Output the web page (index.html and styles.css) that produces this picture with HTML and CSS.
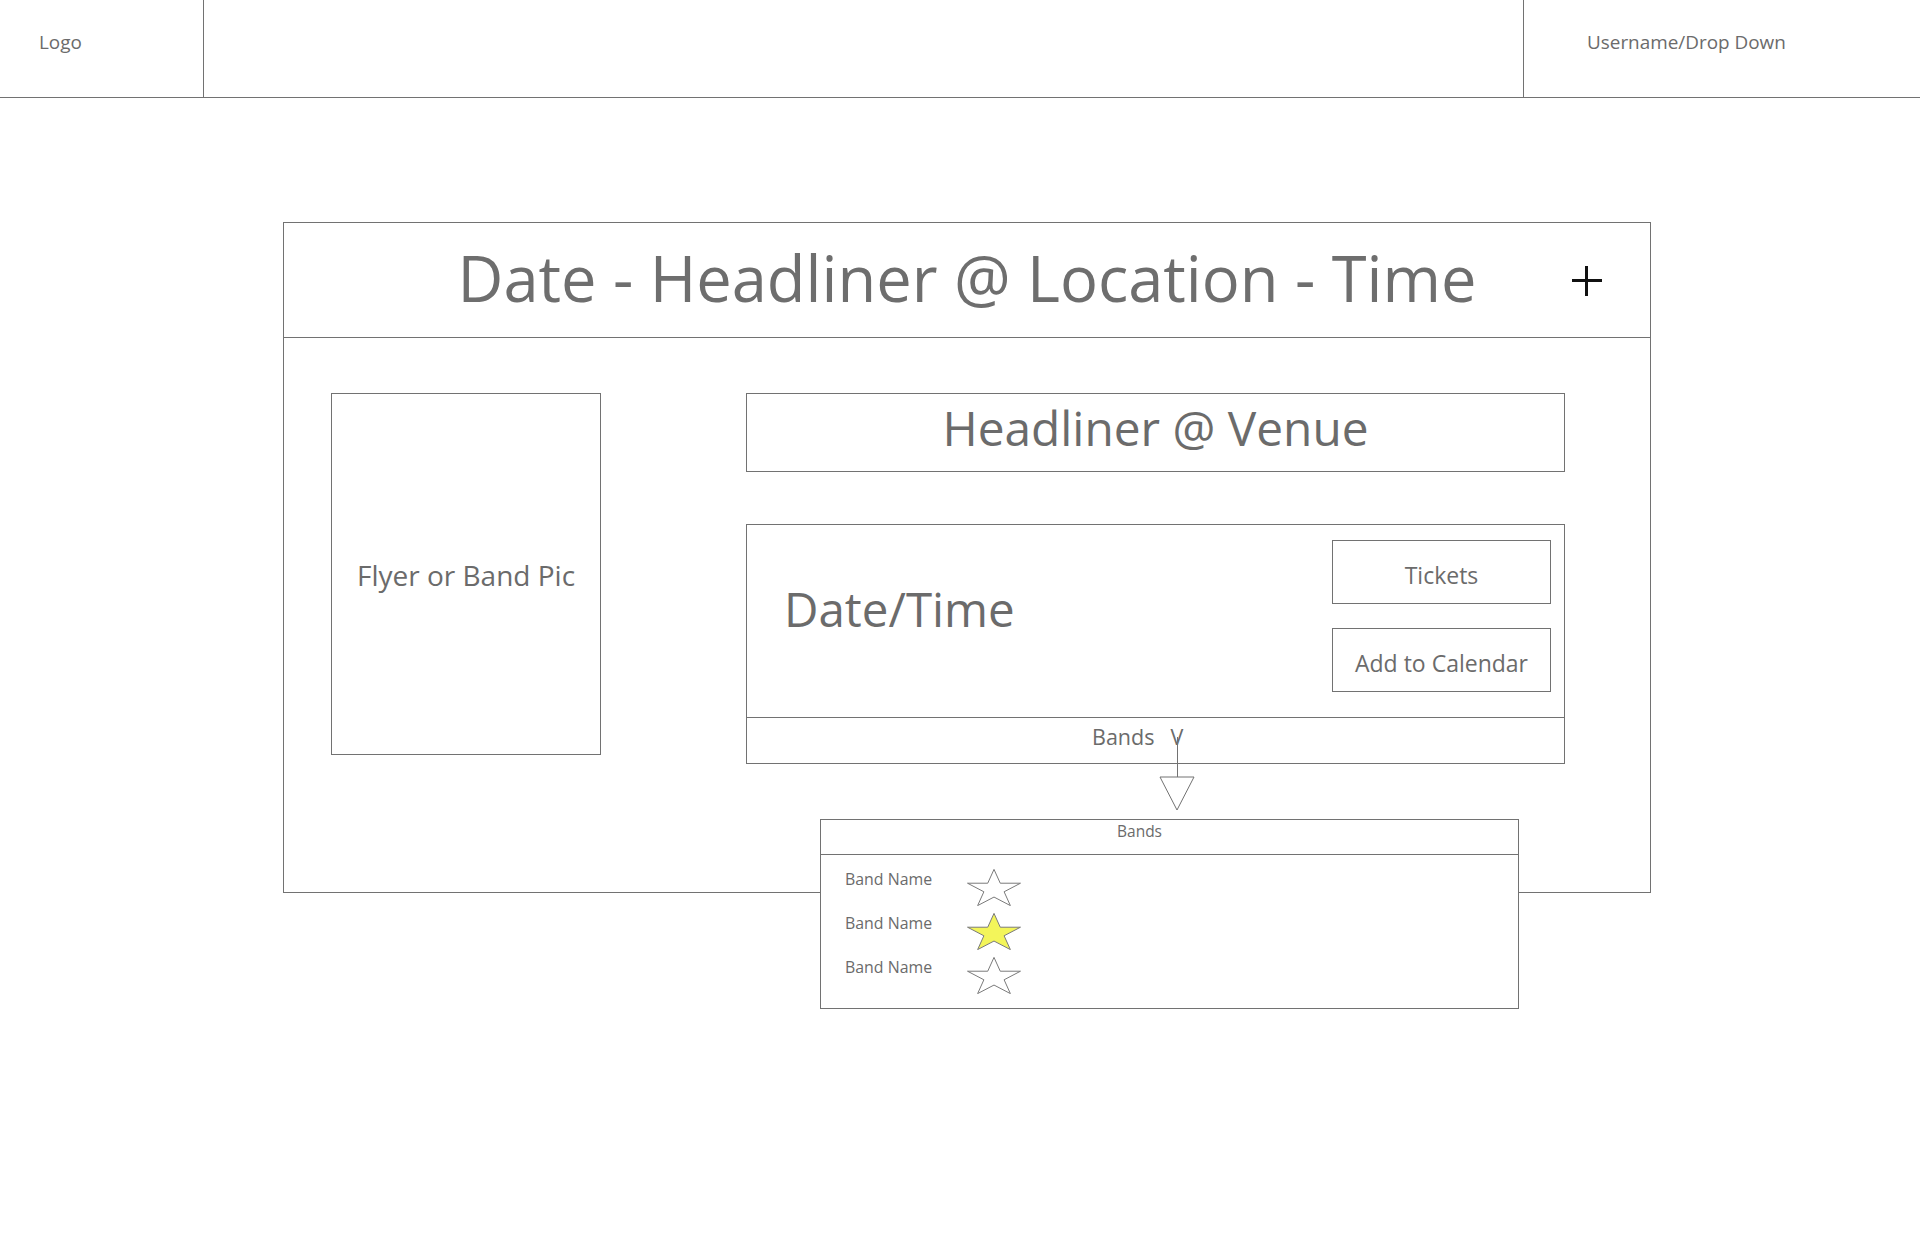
FILE: index.html
```html
<!DOCTYPE html>
<html lang="en">
<head>
<meta charset="utf-8">
<title>Event Wireframe</title>
<link rel="stylesheet" href="styles.css">
</head>
<body>
<header class="topbar">
  <div class="topbar-logo"><span class="topbar-text">Logo</span></div>
  <div class="topbar-middle"></div>
  <div class="topbar-user"><span class="topbar-text">Username/Drop Down</span></div>
</header>

<main class="page">
  <section class="event-card">
    <div class="event-head">
      <div class="event-head-spacer"></div>
      <h1 class="event-title">Date - Headliner @ Location - Time</h1>
      <div class="event-head-action"><span class="plus" aria-label="add"></span></div>
    </div>
    <div class="event-body">
      <div class="flyer"><span class="flyer-text">Flyer or Band Pic</span></div>
      <div class="details">
        <div class="headliner-box"><span class="headliner-text">Headliner @ Venue</span></div>
        <div class="datetime-box">
          <div class="datetime-main">
            <span class="datetime-text">Date/Time</span>
            <div class="actions">
              <div class="action-btn">Tickets</div>
              <div class="action-btn">Add to Calendar</div>
            </div>
          </div>
          <div class="bands-toggle"><span class="bands-label">Bands</span><span class="bands-caret">V</span></div>

          <div class="connector-line"></div>
          <svg class="connector-arrow" width="36" height="35" viewBox="0 0 36 35">
            <polygon points="1,1 35,1 18,34" fill="#fff" stroke="#727272" stroke-width="1"/>
          </svg>

          <div class="bands-menu">
            <div class="bands-menu-head"><span class="bands-menu-title">Bands</span></div>
            <ul class="bands-list">
              <li class="band-row">
                <span class="band-name">Band Name</span>
                <svg class="star" width="54" height="37" viewBox="-1 -1 102 97.2" preserveAspectRatio="none">
                  <polygon points="50,0 61.81,36.35 100,36.35 69.11,58.81 80.92,95.15 50,72.69 19.08,95.15 30.89,58.81 0,36.35 38.19,36.35" fill="#ffffff" stroke="#7a7a7a" stroke-width="1" vector-effect="non-scaling-stroke"/>
                </svg>
              </li>
              <li class="band-row">
                <span class="band-name">Band Name</span>
                <svg class="star" width="54" height="37" viewBox="-1 -1 102 97.2" preserveAspectRatio="none">
                  <polygon points="50,0 61.81,36.35 100,36.35 69.11,58.81 80.92,95.15 50,72.69 19.08,95.15 30.89,58.81 0,36.35 38.19,36.35" fill="#f3f55a" stroke="#7a7a7a" stroke-width="1" vector-effect="non-scaling-stroke"/>
                </svg>
              </li>
              <li class="band-row">
                <span class="band-name">Band Name</span>
                <svg class="star" width="54" height="37" viewBox="-1 -1 102 97.2" preserveAspectRatio="none">
                  <polygon points="50,0 61.81,36.35 100,36.35 69.11,58.81 80.92,95.15 50,72.69 19.08,95.15 30.89,58.81 0,36.35 38.19,36.35" fill="#ffffff" stroke="#7a7a7a" stroke-width="1" vector-effect="non-scaling-stroke"/>
                </svg>
              </li>
            </ul>
          </div>
        </div>
      </div>
    </div>
  </section>
</main>
</body>
</html>
```

FILE: styles.css
```css
* {
  box-sizing: border-box;
}

html, body {
  margin: 0;
  padding: 0;
  background: #ffffff;
}

body {
  font-family: "Open Sans", "Noto Sans", "Liberation Sans", sans-serif;
  color: #6b6b6b;
  width: 1920px;
  height: 1240px;
  overflow: hidden;
}

/* ---------- top bar ---------- */
.topbar {
  display: flex;
  height: 98px;
  border-bottom: 1px solid #727272;
}

.topbar-logo {
  width: 204px;
  border-right: 1px solid #727272;
  display: flex;
  align-items: center;
  padding-left: 39px;
}

.topbar-middle {
  flex: 1;
}

.topbar-user {
  width: 397px;
  border-left: 1px solid #727272;
  display: flex;
  align-items: center;
  padding-left: 63px;
}

.topbar-text {
  font-size: 18.9px;
  line-height: 1;
  margin-top: -13px;
}

/* ---------- page ---------- */
.page {
  padding-top: 124px;
  padding-left: 283px;
}

.event-card {
  width: 1368px;
  height: 671px;
  border: 1px solid #727272;
  display: flex;
  flex-direction: column;
}

.event-head {
  height: 115px;
  border-bottom: 1px solid #727272;
  display: grid;
  grid-template-columns: 1fr auto 1fr;
  align-items: center;
}

.event-title {
  margin: 0;
  font-weight: 400;
  font-size: 63.2px;
  line-height: 1;
  color: #6e6e6e;
  padding-bottom: 4px;
  white-space: nowrap;
}

.event-head-action {
  display: flex;
  justify-content: flex-end;
  padding-right: 48px;
}

.plus {
  position: relative;
  display: block;
  width: 30px;
  height: 30px;
  margin-top: 2px;
}

.plus::before,
.plus::after {
  content: "";
  position: absolute;
  background: #111111;
}

.plus::before {
  left: 0;
  right: 0;
  top: 13px;
  height: 3px;
}

.plus::after {
  top: 0;
  bottom: 0;
  left: 13px;
  width: 3px;
}

.event-body {
  flex: 1;
  display: flex;
  align-items: flex-start;
  padding-top: 55px;
  padding-left: 47px;
  gap: 145px;
}

.flyer {
  width: 270px;
  height: 362px;
  border: 1px solid #727272;
  display: flex;
  align-items: center;
  justify-content: center;
}

.flyer-text {
  font-size: 28px;
  line-height: 1;
  white-space: nowrap;
  margin-top: 2px;
}

.details {
  width: 819px;
  display: flex;
  flex-direction: column;
  gap: 52px;
}

.headliner-box {
  height: 79px;
  border: 1px solid #727272;
  display: flex;
  align-items: center;
  justify-content: center;
}

.headliner-text {
  font-size: 47.8px;
  line-height: 1;
  white-space: nowrap;
  margin-top: -10px;
}

.datetime-box {
  position: relative;
  height: 240px;
  border: 1px solid #727272;
  display: flex;
  flex-direction: column;
}

.datetime-main {
  height: 193px;
  border-bottom: 1px solid #727272;
  display: flex;
  justify-content: space-between;
  align-items: flex-start;
  padding-left: 37px;
  padding-right: 13px;
  padding-top: 15px;
}

.datetime-text {
  font-size: 47.5px;
  line-height: 1;
  margin-top: 45px;
  white-space: nowrap;
}

.actions {
  display: flex;
  flex-direction: column;
  gap: 24px;
}

.action-btn {
  width: 219px;
  height: 64px;
  border: 1px solid #727272;
  display: flex;
  align-items: center;
  justify-content: center;
  font-size: 23px;
  line-height: 1;
  padding-top: 6px;
  white-space: nowrap;
}

.bands-toggle {
  flex: 1;
  display: flex;
  align-items: center;
  padding-left: 345px;
  font-size: 21.5px;
  line-height: 1;
  padding-bottom: 7px;
}

.bands-caret {
  margin-left: 16px;
}

/* connector + overlay menu */
.connector-line {
  position: absolute;
  left: 430px;
  top: 212px;
  width: 1px;
  height: 41px;
  background: #727272;
}

.connector-arrow {
  position: absolute;
  left: 412px;
  top: 251px;
}

.bands-menu {
  position: absolute;
  left: 73px;
  top: 294px;
  width: 699px;
  height: 190px;
  background: #ffffff;
  border: 1px solid #727272;
  z-index: 2;
}

.bands-menu-head {
  height: 35px;
  border-bottom: 1px solid #727272;
  display: flex;
  align-items: center;
  padding-left: 296px;
}

.bands-menu-title {
  font-size: 15.5px;
  line-height: 1;
  margin-top: -10px;
}

.bands-list {
  list-style: none;
  margin: 0;
  padding: 12px 0 0 24px;
}

.band-row {
  display: flex;
  align-items: flex-start;
  height: 44px;
}

.band-name {
  width: 122px;
  font-size: 15.9px;
  line-height: 20px;
  margin-top: 2px;
  white-space: nowrap;
}

.star {
  display: block;
  margin-top: 2px;
}
```
